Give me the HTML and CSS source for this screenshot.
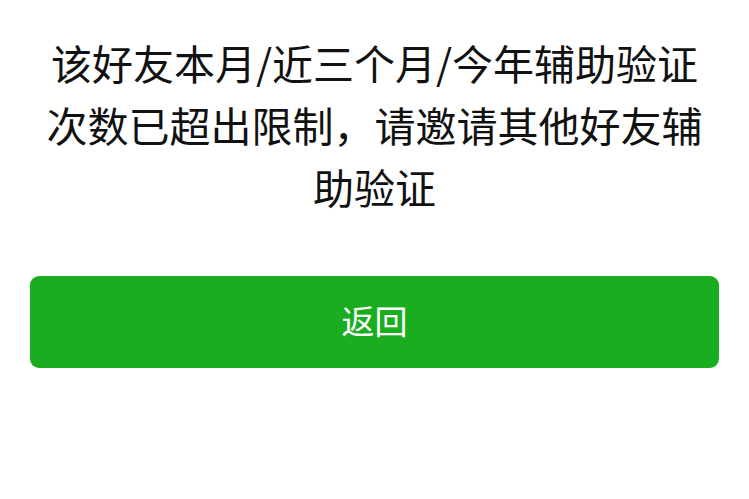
FILE: index.html
```html
<!DOCTYPE html>
<html lang="zh-CN">
<head>
<meta charset="utf-8">
<link rel="stylesheet" href="styles.css">
</head>
<body>
<div class="page">
  <p class="msg">该好友本月/近三个月/今年辅助验证次数已超出限制，请邀请其他好友辅助验证</p>
  <button class="back">返回</button>
</div>
</body>
</html>
```
FILE: styles.css
```css
html, body {
  margin: 0;
  padding: 0;
  background: #ffffff;
}
.page {
  display: flex;
  flex-direction: column;
  padding: 31px 30px 0 30px;
  font-family: "Noto Sans CJK SC", "Noto Sans", sans-serif;
}
.msg {
  margin: 0;
  padding: 0 12px;
  font-size: 41px;
  line-height: 62px;
  color: #111111;
  text-align: center;
}
.back {
  margin-top: 59px;
  height: 92px;
  border: none;
  border-radius: 9px;
  background: #1aad1f;
  color: #ffffff;
  font-family: "Noto Sans CJK SC", "Noto Sans", sans-serif;
  font-size: 33px;
  padding: 0 0 4px 0;
}
```
